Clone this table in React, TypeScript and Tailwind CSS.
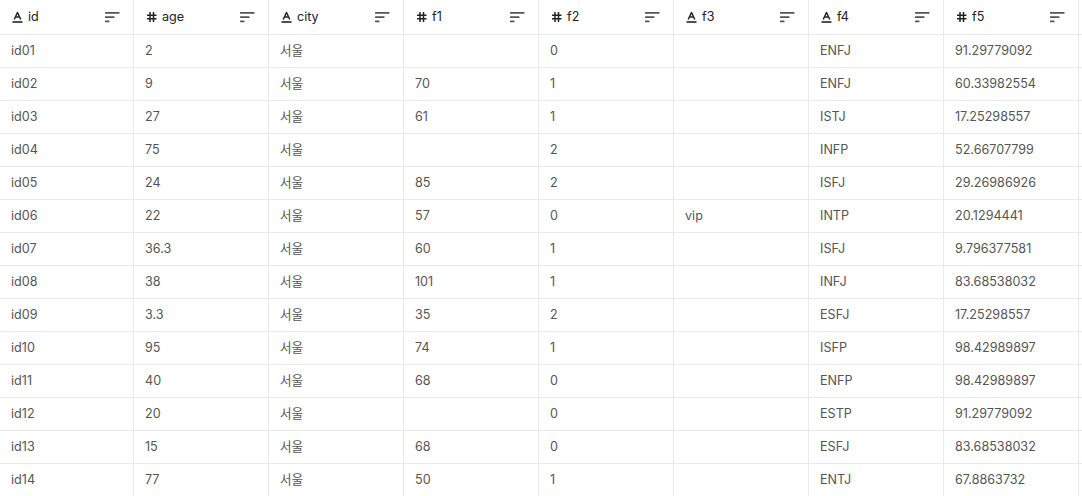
import React from "react"

type ColType = "text" | "num"

const columns: { name: string; type: ColType }[] = [
    { name: "id", type: "text" },
    { name: "age", type: "num" },
    { name: "city", type: "text" },
    { name: "f1", type: "num" },
    { name: "f2", type: "num" },
    { name: "f3", type: "text" },
    { name: "f4", type: "text" },
    { name: "f5", type: "num" },
]

const rows: string[][] = [
    ["id01", "2", "서울", "", "0", "", "ENFJ", "91.29779092"],
    ["id02", "9", "서울", "70", "1", "", "ENFJ", "60.33982554"],
    ["id03", "27", "서울", "61", "1", "", "ISTJ", "17.25298557"],
    ["id04", "75", "서울", "", "2", "", "INFP", "52.66707799"],
    ["id05", "24", "서울", "85", "2", "", "ISFJ", "29.26986926"],
    ["id06", "22", "서울", "57", "0", "vip", "INTP", "20.1294441"],
    ["id07", "36.3", "서울", "60", "1", "", "ISFJ", "9.796377581"],
    ["id08", "38", "서울", "101", "1", "", "INFJ", "83.68538032"],
    ["id09", "3.3", "서울", "35", "2", "", "ESFJ", "17.25298557"],
    ["id10", "95", "서울", "74", "1", "", "ISFP", "98.42989897"],
    ["id11", "40", "서울", "68", "0", "", "ENFP", "98.42989897"],
    ["id12", "20", "서울", "", "0", "", "ESTP", "91.29779092"],
    ["id13", "15", "서울", "68", "0", "", "ESFJ", "83.68538032"],
    ["id14", "77", "서울", "50", "1", "", "ENTJ", "67.8863732"],
]

const TextIcon = () => (
    <svg width="11" height="12" viewBox="0 0 11 12" fill="none" stroke="#222" strokeWidth="1.5">
        <path d="M2.2 8.5 L5.5 1.5 L8.8 8.5" strokeLinejoin="round" />
        <path d="M3.6 6 H7.4" />
        <path d="M0.5 11 H10.5" strokeWidth="1.6" />
    </svg>
)

const NumIcon = () => (
    <svg width="11" height="12" viewBox="0 0 11 12" fill="none" stroke="#222" strokeWidth="1.5">
        <path d="M4 1 V11 M7.5 1 V11 M1 4.3 H10.5 M1 7.8 H10.5" />
    </svg>
)

const SortIcon = () => (
    <svg width="15" height="11" viewBox="0 0 15 11" fill="#555">
        <rect x="0" y="0" width="14.5" height="1.8" rx="0.5" />
        <rect x="0" y="4.2" width="9.5" height="1.8" rx="0.5" />
        <rect x="0" y="8.4" width="4.5" height="1.8" rx="0.5" />
    </svg>
)

const colWidth = (i: number) => (i === 0 ? "w-[134px]" : "w-[135px]")

export default function App() {
    return (
        <div className="w-[1082px] h-[496px] overflow-hidden bg-white text-[12.6px]" style={{ fontFamily: "Inter, 'Noto Sans CJK KR', sans-serif" }}>
            {/* Header */}
            <div className="flex h-[35px] border-b border-[#e9e9e9]">
                {columns.map((c, i) => (
                    <div key={c.name} className={`${colWidth(i)} shrink-0 flex items-center justify-between pl-[12px] pr-[13px] border-r border-[#e9e9e9] text-[#222]`}>
                        <div className="flex items-center gap-[5px]">
                            {c.type === "text" ? <TextIcon /> : <NumIcon />}
                            <span className="leading-none">{c.name}</span>
                        </div>
                        <SortIcon />
                    </div>
                ))}
            </div>

            {/* Rows */}
            {rows.map((row, r) => (
                <div key={r} className="flex h-[33px] border-b border-[#e9e9e9]">
                    {row.map((v, i) => (
                        <div key={i} className={`${colWidth(i)} shrink-0 flex items-center pl-[11px] border-r border-[#e9e9e9] text-[#555]`}>
                            {v}
                        </div>
                    ))}
                </div>
            ))}
        </div>
    )
}
